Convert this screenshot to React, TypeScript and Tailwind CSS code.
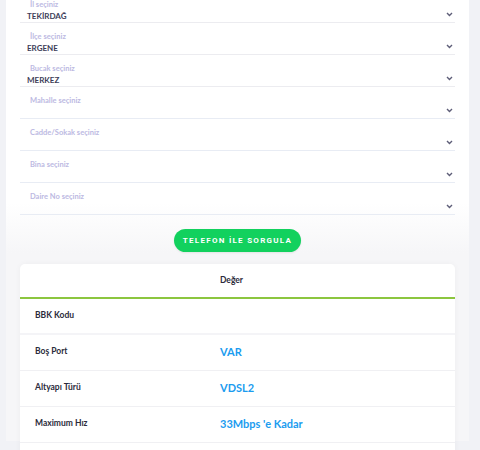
const fields = [
  { label: 'İl seçiniz', value: 'TEKİRDAĞ' },
  { label: 'İlçe seçiniz', value: 'ERGENE' },
  { label: 'Bucak seçiniz', value: 'MERKEZ' },
  { label: 'Mahalle seçiniz', value: '' },
  { label: 'Cadde/Sokak seçiniz', value: '' },
  { label: 'Bina seçiniz', value: '' },
  { label: 'Daire No seçiniz', value: '' },
]

const rows = [
  { name: 'BBK Kodu', value: '' },
  { name: 'Boş Port', value: 'VAR' },
  { name: 'Altyapı Türü', value: 'VDSL2' },
  { name: 'Maximum Hız', value: "33Mbps 'e Kadar" },
  { name: '', value: '' },
]

function Chevron() {
  return (
    <svg width="7" height="5" viewBox="0 0 7 5" className="mb-[5px] mr-[2px] shrink-0">
      <path d="M1 1l2.5 2.5L6 1" fill="none" stroke="#5e5e78" strokeWidth="1.4" />
    </svg>
  )
}

export default function App() {
  return (
    <div className="h-[450px] overflow-hidden bg-[#f1f2f6] font-['Lato',sans-serif]">
      <div className="ml-[6px] w-[463px] h-full px-[14px] bg-[linear-gradient(180deg,#ffffff_212px,#f6f6f8_262px)]">
        <div className="-mt-[9px]">
          {fields.map((f, i) => (
            <div
              key={f.label}
              className={`flex items-end h-[32px] border-b ${i < 3 ? 'border-[#ececf0]' : 'border-[#e8ecf4]'}`}
            >
              <div className="flex-1 flex flex-col pt-[8px]">
                <span className="pl-[10px] text-[7.5px] leading-[10px] font-bold text-[#bcb9e2]">{f.label}</span>
                <span className="pl-[7px] text-[8px] leading-[12px] font-bold text-[#3d3d58] h-[12px]">{f.value}</span>
              </div>
              <Chevron />
            </div>
          ))}
        </div>

        <div className="flex justify-center mt-[14px]">
          <button className="h-[23px] w-[127px] rounded-full bg-[#12d15e] text-white text-[8px] font-bold tracking-[0.16em] font-['Roboto',sans-serif] shadow-[0_1px_2px_rgba(0,0,0,0.08)]">
            TELEFON İLE SORGULA
          </button>
        </div>

        <div className="mt-[12px] bg-white rounded-t-[5px] shadow-[0_0_6px_rgba(0,0,0,0.04)]">
          <div className="h-[33px] flex items-center justify-center pr-[12px] text-[8.5px] font-bold text-[#2b2b3b]">
            Değer
          </div>
          <div className="h-[2px] bg-[#8cc63f]" />
          {rows.map((r, i) => (
            <div
              key={i}
              className={`flex items-start h-[36px] pt-[10px] ${i === 0 ? 'border-b-2 border-[#f4f4f7]' : 'border-b border-[#f0f0f3]'}`}
            >
              <span className="w-[200px] pl-[15px] text-[8.5px] leading-[12px] font-bold text-[#2b2b3b]">{r.name}</span>
              <span className="text-[11px] leading-[14px] font-bold text-[#1b9cef]">{r.value}</span>
            </div>
          ))}
        </div>
      </div>
    </div>
  )
}
